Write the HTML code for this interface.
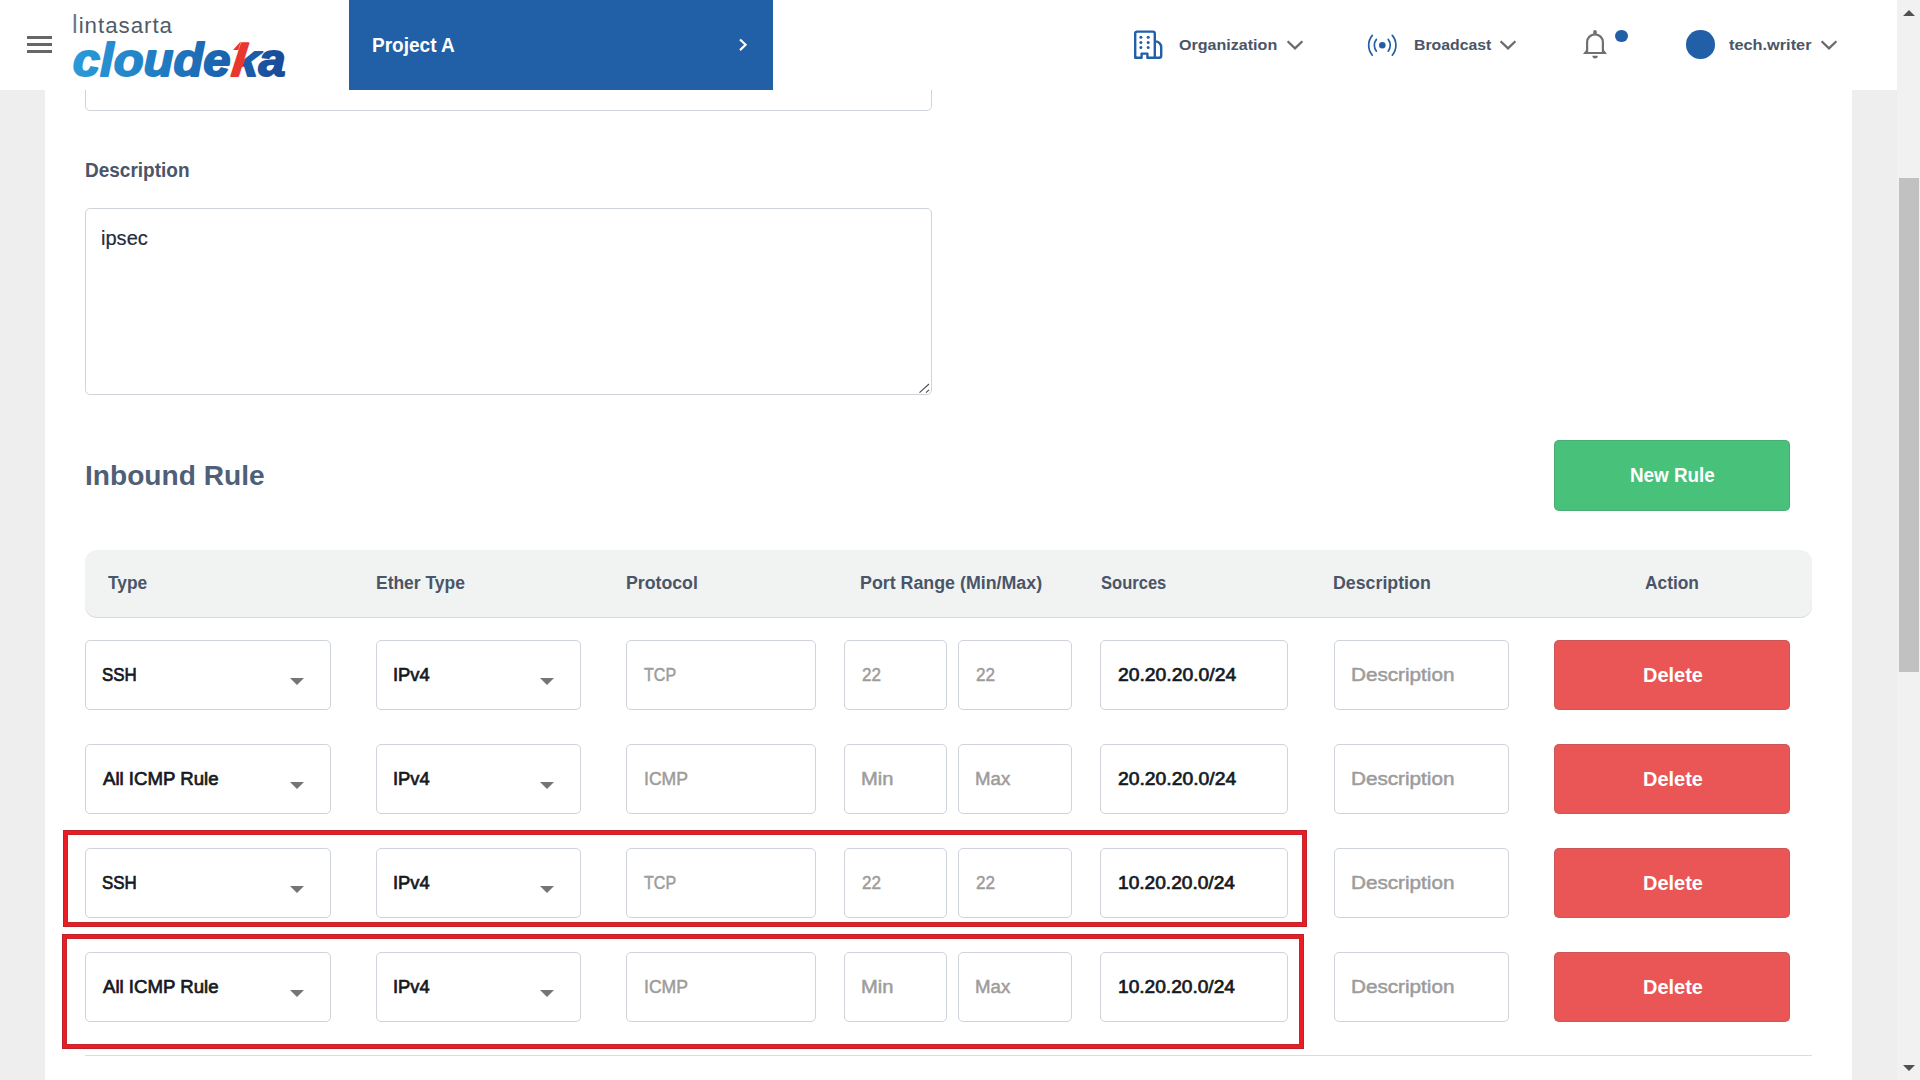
<!DOCTYPE html>
<html lang="en">
<head>
<meta charset="utf-8">
<title>Cloudeka - Security Group</title>
<style>
*{box-sizing:border-box;margin:0;padding:0}
html,body{width:1920px;height:1080px;overflow:hidden;background:#eee;font-family:"Liberation Sans",sans-serif;color:#1f2d3d}
.abs{position:absolute}
#card{position:absolute;left:45px;top:90px;width:1807px;height:990px;background:#fff}
#hdr{position:absolute;left:0;top:0;width:1897px;height:90px;background:#fff}
#sb{position:absolute;left:1897px;top:0;width:23px;height:1080px;background:#f1f1f1}
#sb .thumb{position:absolute;left:2px;top:178px;width:20px;height:494px;background:#c1c1c1}
.t{position:absolute;white-space:nowrap;line-height:1;transform-origin:0 0}
.fld{position:absolute;height:70px;border:1px solid #ced4da;border-radius:5px;background:#fff}
.arr{position:absolute;width:0;height:0;border-left:7px solid transparent;border-right:7px solid transparent;border-top:7px solid #757575}
.del{position:absolute;left:1554px;width:236px;height:70px;border-radius:5px;background:#ea5555;box-shadow:inset 0 0 0 1px rgba(90,90,90,.2)}
.red{position:absolute;box-shadow:0 0 0 1px #c4262e,0 0 0 4px #ec1c24,0 0 0 5px #bd222a}
</style>
</head>
<body>
<main id="card"></main>

<!-- top cut-off input -->
<div class="abs" style="left:85px;top:60px;width:847px;height:51px;border:1px solid #ced4da;border-radius:5px;background:#fff"></div>

<!-- textarea -->
<div class="abs" style="left:85px;top:208px;width:847px;height:187px;border:1px solid #ced4da;border-radius:5px;background:#fff"></div>
<svg class="abs" style="left:917px;top:381px" width="14" height="14" viewBox="0 0 14 14"><path d="M2.5 11.6 L12 3 M9 11.6 L12 8.9" stroke="#4d4d4d" stroke-width="1.1" fill="none"/></svg>

<!-- New Rule button -->
<div class="abs" style="left:1554px;top:440px;width:236px;height:71px;border-radius:5px;background:#48c17b;box-shadow:inset 0 0 0 1px rgba(90,90,90,.2)"></div>

<!-- table header -->
<div class="abs" style="left:85px;top:550px;width:1727px;height:67px;background:#f1f3f2;border-radius:12px;box-shadow:0 1px 0 0 #d7dadb"></div>

<div class="fld" style="left:85px;top:640px;width:246px"></div><div class="arr" style="left:290px;top:678px"></div>
<div class="fld" style="left:376px;top:640px;width:205px"></div><div class="arr" style="left:540px;top:678px"></div>
<div class="fld" style="left:626px;top:640px;width:190px"></div>
<div class="fld" style="left:844px;top:640px;width:103px"></div>
<div class="fld" style="left:958px;top:640px;width:114px"></div>
<div class="fld" style="left:1100px;top:640px;width:188px"></div>
<div class="fld" style="left:1334px;top:640px;width:175px"></div>
<div class="del" style="top:640px"></div>
<div class="fld" style="left:85px;top:744px;width:246px"></div><div class="arr" style="left:290px;top:782px"></div>
<div class="fld" style="left:376px;top:744px;width:205px"></div><div class="arr" style="left:540px;top:782px"></div>
<div class="fld" style="left:626px;top:744px;width:190px"></div>
<div class="fld" style="left:844px;top:744px;width:103px"></div>
<div class="fld" style="left:958px;top:744px;width:114px"></div>
<div class="fld" style="left:1100px;top:744px;width:188px"></div>
<div class="fld" style="left:1334px;top:744px;width:175px"></div>
<div class="del" style="top:744px"></div>
<div class="fld" style="left:85px;top:848px;width:246px"></div><div class="arr" style="left:290px;top:886px"></div>
<div class="fld" style="left:376px;top:848px;width:205px"></div><div class="arr" style="left:540px;top:886px"></div>
<div class="fld" style="left:626px;top:848px;width:190px"></div>
<div class="fld" style="left:844px;top:848px;width:103px"></div>
<div class="fld" style="left:958px;top:848px;width:114px"></div>
<div class="fld" style="left:1100px;top:848px;width:188px"></div>
<div class="fld" style="left:1334px;top:848px;width:175px"></div>
<div class="del" style="top:848px"></div>
<div class="fld" style="left:85px;top:952px;width:246px"></div><div class="arr" style="left:290px;top:990px"></div>
<div class="fld" style="left:376px;top:952px;width:205px"></div><div class="arr" style="left:540px;top:990px"></div>
<div class="fld" style="left:626px;top:952px;width:190px"></div>
<div class="fld" style="left:844px;top:952px;width:103px"></div>
<div class="fld" style="left:958px;top:952px;width:114px"></div>
<div class="fld" style="left:1100px;top:952px;width:188px"></div>
<div class="fld" style="left:1334px;top:952px;width:175px"></div>
<div class="del" style="top:952px"></div>

<!-- red highlight boxes -->
<div class="red" style="left:68px;top:835px;width:1234px;height:87px"></div>
<div class="red" style="left:67px;top:939px;width:1232px;height:105px"></div>

<div class="abs" style="left:85px;top:1055px;width:1727px;height:1px;background:#dcdcdc"></div>

<header id="hdr">
<!-- hamburger -->
<div class="abs" style="left:27px;top:36px;width:25.4px;height:2.5px;background:#666"></div>
<div class="abs" style="left:27px;top:43px;width:25.4px;height:2.5px;background:#666"></div>
<div class="abs" style="left:27px;top:50px;width:25.4px;height:2.5px;background:#666"></div>
<!-- logo -->
<svg class="abs" style="left:60px;top:0" width="240" height="90" viewBox="60 0 240 90" font-family="Liberation Sans, sans-serif">
<defs>
<linearGradient id="lgA" gradientUnits="userSpaceOnUse" x1="73" y1="0" x2="285" y2="0"><stop offset="0" stop-color="#2b9ad8"/><stop offset="0.45" stop-color="#2079c0"/><stop offset="1" stop-color="#194a98"/></linearGradient>
<linearGradient id="lgK" gradientUnits="userSpaceOnUse" x1="233" y1="58" x2="243.2" y2="60.4"><stop offset="0" stop-color="#e8372e"/><stop offset="1" stop-color="#e8372e"/><stop offset="1" stop-color="#1c5ba8"/></linearGradient>
</defs>
<text x="72.0" y="32.9" font-size="22.3" fill="#4f5c69" textLength="100" lengthAdjust="spacing"><tspan font-size="25.5" fill="#6d7985">l</tspan>intasarta</text>
<g font-size="45.4" font-weight="bold" font-style="italic" stroke-width="1.8" stroke-linejoin="round">
<text x="72.8" y="75.9" textLength="157.8" lengthAdjust="spacingAndGlyphs" fill="url(#lgA)" stroke="url(#lgA)">cloude</text>
<text transform="translate(0,75.9) skewX(-6.2) translate(0,-75.9)" x="230.6" y="75.9" textLength="27.2" lengthAdjust="spacingAndGlyphs" fill="url(#lgK)" stroke="url(#lgK)">k</text>
<text x="258.6" y="75.9" textLength="27" lengthAdjust="spacingAndGlyphs" fill="url(#lgA)" stroke="url(#lgA)">a</text>
</g>
<path d="M240.9 41.2 L233 50 L238.4 50 Z" fill="#e8372e"/>
</svg>
<!-- project box -->
<div class="abs" style="left:349px;top:0;width:424px;height:90px;background:#215fa6"></div>
<svg class="abs" style="left:735px;top:35px" width="16" height="20" viewBox="0 0 16 20"><path d="M5 4.5 L10.6 9.8 L5 15.1" stroke="#fff" stroke-width="2.2" fill="none"/></svg>
<!-- organization -->
<svg class="abs" style="left:1130px;top:26px" width="36" height="36" viewBox="0 0 36 36" fill="none" stroke="#215fa6" stroke-width="2.4" stroke-linejoin="round" stroke-linecap="round">
<path d="M5.2 31.8 V7.6 a2 2 0 0 1 2-2 H22.8 a2 2 0 0 1 2 2 V31.8 M24.8 15.4 h0.6 a5.8 5.8 0 0 1 5.8 5.8 V29.8 a2 2 0 0 1-2 2 H17.4 V27.6 H11.6 V31.8 H7.2 a2 2 0 0 1-2-2"/>
<g fill="#215fa6" stroke="none"><circle cx="10.9" cy="11.2" r="1.5"/><circle cx="18.2" cy="11.2" r="1.5"/><circle cx="10.9" cy="16.4" r="1.5"/><circle cx="18.2" cy="16.4" r="1.5"/><circle cx="10.9" cy="21.6" r="1.5"/><circle cx="18.2" cy="21.6" r="1.5"/></g>
</svg>
<svg class="abs" style="left:1285px;top:37px" width="20" height="16" viewBox="0 0 20 16"><path d="M2.6 4.2 L10 11.4 L17.4 4.2" stroke="#696969" stroke-width="2.2" fill="none"/></svg>
<!-- broadcast -->
<svg class="abs" style="left:1364px;top:27px" width="36" height="36" viewBox="0 0 36 36" fill="none" stroke="#215fa6" stroke-width="1.7" stroke-linecap="round">
<circle cx="18.3" cy="18.2" r="3.3" fill="#215fa6" stroke="none"/>
<path d="M12.4 12.4 a9.5 9.5 0 0 0 0 11.8 M24.2 12.4 a9.5 9.5 0 0 1 0 11.8 M8.3 8.4 a15.4 15.4 0 0 0 0 19.8 M28.3 8.4 a15.4 15.4 0 0 1 0 19.8"/>
</svg>
<svg class="abs" style="left:1498px;top:37px" width="20" height="16" viewBox="0 0 20 16"><path d="M2.6 4.2 L10 11.4 L17.4 4.2" stroke="#696969" stroke-width="2.2" fill="none"/></svg>
<!-- bell -->
<svg class="abs" style="left:1575px;top:25px" width="40" height="40" viewBox="1575 25 40 40">
<path d="M1587.1 53 V42.2 a7.9 7.9 0 0 1 15.8 0 V53" fill="none" stroke="#707070" stroke-width="2.2"/>
<path d="M1583 54.1 L1586.1 50 V51.9 H1603.9 V50 L1607 54.1 Z M1592.4 55.8 H1597.8 a2.7 2.6 0 0 1 -5.4 0 Z" fill="#707070"/>
<rect x="1593.2" y="30" width="3.6" height="4.6" rx="1.8" fill="#707070"/>
</svg>
<div class="abs" style="left:1615.2px;top:29.7px;width:12.6px;height:12.6px;border-radius:50%;background:#215fa6"></div>
<!-- avatar -->
<div class="abs" style="left:1686px;top:30px;width:28.5px;height:28.5px;border-radius:50%;background:#215fa6"></div>
<svg class="abs" style="left:1819px;top:37px" width="20" height="16" viewBox="0 0 20 16"><path d="M2.6 4.2 L10 11.4 L17.4 4.2" stroke="#696969" stroke-width="2.2" fill="none"/></svg>
</header>

<div class="t" style="left:84.63px;top:160.65px;font-size:19.5px;font-weight:bold;color:#4a5568;transform:scaleX(0.9748);">Description</div>
<div class="t" style="left:101.40px;top:227.53px;font-size:20px;color:#1f2d3d;-webkit-text-stroke:0.2px #1f2d3d;transform:scaleX(1.0024);">ipsec</div>
<div class="t" style="left:85.40px;top:461.90px;font-size:28px;font-weight:bold;color:#4f5f78;transform:scaleX(1.0040);">Inbound Rule</div>
<div class="t" style="left:1629.92px;top:466.25px;font-size:19.3px;font-weight:bold;color:#fff;transform:scaleX(0.9772);">New Rule</div>
<div class="t" style="left:107.70px;top:574.00px;font-size:18px;font-weight:bold;color:#4a5568;transform:scaleX(0.9640);">Type</div>
<div class="t" style="left:375.83px;top:574.00px;font-size:18px;font-weight:bold;color:#4a5568;transform:scaleX(0.9694);">Ether Type</div>
<div class="t" style="left:625.82px;top:574.00px;font-size:18px;font-weight:bold;color:#4a5568;transform:scaleX(0.9845);">Protocol</div>
<div class="t" style="left:860.41px;top:574.00px;font-size:18px;font-weight:bold;color:#4a5568;transform:scaleX(0.9895);">Port Range (Min/Max)</div>
<div class="t" style="left:1100.90px;top:574.00px;font-size:18px;font-weight:bold;color:#4a5568;transform:scaleX(0.9194);">Sources</div>
<div class="t" style="left:1333.21px;top:574.00px;font-size:18px;font-weight:bold;color:#4a5568;transform:scaleX(0.9874);">Description</div>
<div class="t" style="left:1645.00px;top:574.00px;font-size:18px;font-weight:bold;color:#4a5568;transform:scaleX(0.9636);">Action</div>
<div class="t" style="left:102.42px;top:665.81px;font-size:18.4px;color:#151a22;-webkit-text-stroke:0.7px #151a22;transform:scaleX(0.9185);">SSH</div>
<div class="t" style="left:393.15px;top:665.80px;font-size:18.4px;color:#151a22;-webkit-text-stroke:0.7px #151a22;transform:scaleX(0.9980);">IPv4</div>
<div class="t" style="left:644.01px;top:665.56px;font-size:18.9px;color:#9c9c9c;-webkit-text-stroke:0.5px #9c9c9c;transform:scaleX(0.8492);">TCP</div>
<div class="t" style="left:861.53px;top:665.56px;font-size:18.9px;color:#9c9c9c;-webkit-text-stroke:0.5px #9c9c9c;transform:scaleX(0.9045);">22</div>
<div class="t" style="left:975.53px;top:665.56px;font-size:18.9px;color:#9c9c9c;-webkit-text-stroke:0.5px #9c9c9c;transform:scaleX(0.9045);">22</div>
<div class="t" style="left:1117.97px;top:665.80px;font-size:18.4px;color:#151a22;-webkit-text-stroke:0.7px #151a22;transform:scaleX(1.0508);">20.20.20.0/24</div>
<div class="t" style="left:1350.58px;top:665.55px;font-size:18.9px;color:#9c9c9c;-webkit-text-stroke:0.5px #9c9c9c;transform:scaleX(1.0943);">Description</div>
<div class="t" style="left:1642.76px;top:665.85px;font-size:19.3px;font-weight:bold;color:#fff;transform:scaleX(1.0359);">Delete</div>
<div class="t" style="left:102.95px;top:769.80px;font-size:18.4px;color:#151a22;-webkit-text-stroke:0.7px #151a22;transform:scaleX(1.0119);">All ICMP Rule</div>
<div class="t" style="left:393.15px;top:769.80px;font-size:18.4px;color:#151a22;-webkit-text-stroke:0.7px #151a22;transform:scaleX(0.9980);">IPv4</div>
<div class="t" style="left:643.60px;top:769.55px;font-size:18.9px;color:#9c9c9c;-webkit-text-stroke:0.5px #9c9c9c;transform:scaleX(0.9322);">ICMP</div>
<div class="t" style="left:860.70px;top:769.55px;font-size:18.9px;color:#9c9c9c;-webkit-text-stroke:0.5px #9c9c9c;transform:scaleX(1.0634);">Min</div>
<div class="t" style="left:974.96px;top:769.55px;font-size:18.9px;color:#9c9c9c;-webkit-text-stroke:0.5px #9c9c9c;transform:scaleX(0.9876);">Max</div>
<div class="t" style="left:1117.97px;top:769.80px;font-size:18.4px;color:#151a22;-webkit-text-stroke:0.7px #151a22;transform:scaleX(1.0508);">20.20.20.0/24</div>
<div class="t" style="left:1350.58px;top:769.55px;font-size:18.9px;color:#9c9c9c;-webkit-text-stroke:0.5px #9c9c9c;transform:scaleX(1.0943);">Description</div>
<div class="t" style="left:1642.76px;top:769.85px;font-size:19.3px;font-weight:bold;color:#fff;transform:scaleX(1.0359);">Delete</div>
<div class="t" style="left:102.42px;top:873.81px;font-size:18.4px;color:#151a22;-webkit-text-stroke:0.7px #151a22;transform:scaleX(0.9185);">SSH</div>
<div class="t" style="left:393.15px;top:873.80px;font-size:18.4px;color:#151a22;-webkit-text-stroke:0.7px #151a22;transform:scaleX(0.9980);">IPv4</div>
<div class="t" style="left:644.01px;top:873.56px;font-size:18.9px;color:#9c9c9c;-webkit-text-stroke:0.5px #9c9c9c;transform:scaleX(0.8492);">TCP</div>
<div class="t" style="left:861.53px;top:873.56px;font-size:18.9px;color:#9c9c9c;-webkit-text-stroke:0.5px #9c9c9c;transform:scaleX(0.9045);">22</div>
<div class="t" style="left:975.53px;top:873.56px;font-size:18.9px;color:#9c9c9c;-webkit-text-stroke:0.5px #9c9c9c;transform:scaleX(0.9045);">22</div>
<div class="t" style="left:1117.92px;top:873.80px;font-size:18.4px;color:#151a22;-webkit-text-stroke:0.7px #151a22;transform:scaleX(1.0396);">10.20.20.0/24</div>
<div class="t" style="left:1350.58px;top:873.55px;font-size:18.9px;color:#9c9c9c;-webkit-text-stroke:0.5px #9c9c9c;transform:scaleX(1.0943);">Description</div>
<div class="t" style="left:1642.76px;top:873.85px;font-size:19.3px;font-weight:bold;color:#fff;transform:scaleX(1.0359);">Delete</div>
<div class="t" style="left:102.95px;top:977.80px;font-size:18.4px;color:#151a22;-webkit-text-stroke:0.7px #151a22;transform:scaleX(1.0119);">All ICMP Rule</div>
<div class="t" style="left:393.15px;top:977.80px;font-size:18.4px;color:#151a22;-webkit-text-stroke:0.7px #151a22;transform:scaleX(0.9980);">IPv4</div>
<div class="t" style="left:643.60px;top:977.55px;font-size:18.9px;color:#9c9c9c;-webkit-text-stroke:0.5px #9c9c9c;transform:scaleX(0.9322);">ICMP</div>
<div class="t" style="left:860.70px;top:977.55px;font-size:18.9px;color:#9c9c9c;-webkit-text-stroke:0.5px #9c9c9c;transform:scaleX(1.0634);">Min</div>
<div class="t" style="left:974.96px;top:977.55px;font-size:18.9px;color:#9c9c9c;-webkit-text-stroke:0.5px #9c9c9c;transform:scaleX(0.9876);">Max</div>
<div class="t" style="left:1117.92px;top:977.80px;font-size:18.4px;color:#151a22;-webkit-text-stroke:0.7px #151a22;transform:scaleX(1.0396);">10.20.20.0/24</div>
<div class="t" style="left:1350.58px;top:977.55px;font-size:18.9px;color:#9c9c9c;-webkit-text-stroke:0.5px #9c9c9c;transform:scaleX(1.0943);">Description</div>
<div class="t" style="left:1642.76px;top:977.85px;font-size:19.3px;font-weight:bold;color:#fff;transform:scaleX(1.0359);">Delete</div>
<div class="t" style="left:372.02px;top:35.75px;font-size:19.5px;font-weight:bold;color:#fff;transform:scaleX(0.9760);">Project A</div>
<div class="t" style="left:1179.30px;top:37.20px;font-size:15.4px;font-weight:bold;color:#4a5568;transform:scaleX(1.0442);">Organization</div>
<div class="t" style="left:1413.57px;top:37.22px;font-size:15.4px;font-weight:bold;color:#4a5568;transform:scaleX(1.0264);">Broadcast</div>
<div class="t" style="left:1728.50px;top:37.20px;font-size:15.4px;font-weight:bold;color:#4a5568;transform:scaleX(1.0598);">tech.writer</div>

<!-- scrollbar -->
<div id="sb"><div class="thumb"></div>
<svg class="abs" style="left:0;top:0" width="23" height="1080"><path d="M6 16 L18 16 L12 10 Z M6 1065 L18 1065 L12 1071 Z" fill="#505050"/></svg>
</div>
</body>
</html>
